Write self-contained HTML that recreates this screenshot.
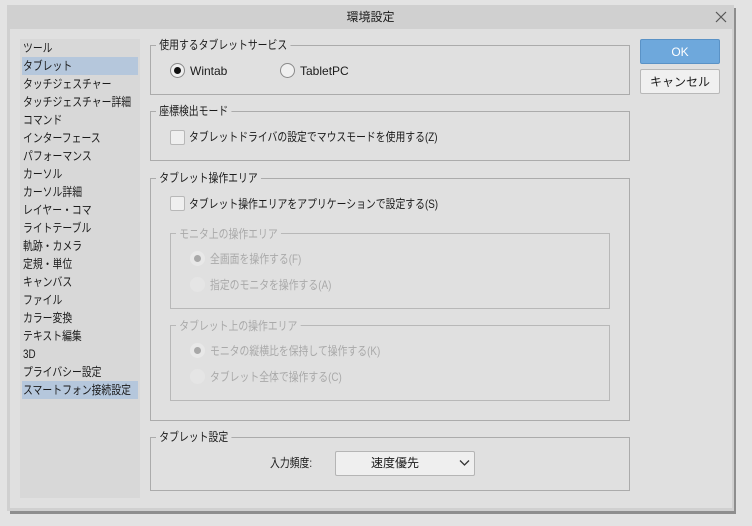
<!DOCTYPE html>
<html><head><meta charset="utf-8"><style>
*{margin:0;padding:0;box-sizing:border-box}
body{width:752px;height:526px;background:#e3e3e3;position:relative;overflow:hidden;font-family:"Liberation Sans","Noto Sans CJK JP",sans-serif;font-size:12px;color:#1a1a1a}
.a{position:absolute}
.t{position:absolute;white-space:nowrap;line-height:14px;transform:scaleX(.82);transform-origin:0 0}
.t.lat,.t.c{transform:none}
.g{position:absolute;border:1px solid #ababab}
.lg{position:absolute;background:#e0e0e0;padding:0 4px;line-height:14px;white-space:nowrap;transform:scaleX(.82);transform-origin:0 0}
.cb{position:absolute;width:15px;height:15px;border:1px solid #b8b8b8;background:#efefef;border-radius:2px}
.rd{position:absolute;width:15px;height:15px;border-radius:50%;border:1px solid #8a8a8a;background:#efefef}
.dis{color:#a9a9a9}
.side div{height:18px;line-height:18px;padding-left:3px;white-space:nowrap}
.side span{display:inline-block;transform:scaleX(.82);transform-origin:0 0}
</style></head><body>
<div class="a" style="left:10px;top:8px;width:726px;height:506px;background:#8e8e8e"></div>
<div class="a" style="left:7px;top:5px;width:727px;height:506px;background:#d0d0d0"></div>
<div class="t c" style="left:0;width:741px;top:10px;text-align:center">環境設定</div>
<svg class="a" style="left:715px;top:11px" width="12" height="12"><path d="M1 1L11 11M11 1L1 11" stroke="#555" stroke-width="1.2"/></svg>
<div class="a" style="left:10px;top:29px;width:722px;height:479px;background:#e0e0e0"></div>
<div class="a side" style="left:20px;top:39px;width:120px;height:459px;background:#d8d8d8">
<div><span>ツール</span></div>
<div style="background:#b5c7dc;margin:0 2px;padding-left:1px"><span>タブレット</span></div>
<div><span>タッチジェスチャー</span></div>
<div><span>タッチジェスチャー詳細</span></div>
<div><span>コマンド</span></div>
<div><span>インターフェース</span></div>
<div><span>パフォーマンス</span></div>
<div><span>カーソル</span></div>
<div><span>カーソル詳細</span></div>
<div><span>レイヤー・コマ</span></div>
<div><span>ライトテーブル</span></div>
<div><span>軌跡・カメラ</span></div>
<div><span>定規・単位</span></div>
<div><span>キャンバス</span></div>
<div><span>ファイル</span></div>
<div><span>カラー変換</span></div>
<div><span>テキスト編集</span></div>
<div><span>3D</span></div>
<div><span>プライバシー設定</span></div>
<div style="background:#b5c7dc;margin:0 2px;padding-left:1px"><span>スマートフォン接続設定</span></div>
</div>
<div class="g" style="left:150px;top:45px;width:480px;height:50px"></div>
<div class="lg" style="left:156px;top:38px">使用するタブレットサービス</div>
<div class="rd" style="left:170px;top:63px"><div class="a" style="left:3px;top:3px;width:7px;height:7px;border-radius:50%;background:#111"></div></div>
<div class="t lat" style="left:190px;top:64px">Wintab</div>
<div class="rd" style="left:280px;top:63px"></div>
<div class="t lat" style="left:300px;top:64px">TabletPC</div>
<div class="g" style="left:150px;top:111px;width:480px;height:50px"></div>
<div class="lg" style="left:156px;top:104px">座標検出モード</div>
<div class="cb" style="left:170px;top:130px"></div>
<div class="t" style="left:189px;top:130px">タブレットドライバの設定でマウスモードを使用する(Z)</div>
<div class="g" style="left:150px;top:178px;width:480px;height:243px"></div>
<div class="lg" style="left:156px;top:171px">タブレット操作エリア</div>
<div class="cb" style="left:170px;top:196px"></div>
<div class="t" style="left:189px;top:197px">タブレット操作エリアをアプリケーションで設定する(S)</div>
<div class="g" style="left:170px;top:233px;width:440px;height:76px;border-color:#b8b8b8"></div>
<div class="lg dis" style="left:176px;top:227px">モニタ上の操作エリア</div>
<div class="a" style="left:190px;top:251px;width:15px;height:15px;border-radius:50%;background:#e8e8e8"><div class="a" style="left:4px;top:4px;width:7px;height:7px;border-radius:50%;background:#a8a8a8"></div></div>
<div class="t dis" style="left:210px;top:252px">全画面を操作する(F)</div>
<div class="a" style="left:190px;top:277px;width:15px;height:15px;border-radius:50%;background:#e5e5e5"></div>
<div class="t dis" style="left:210px;top:278px">指定のモニタを操作する(A)</div>
<div class="g" style="left:170px;top:325px;width:440px;height:76px;border-color:#b8b8b8"></div>
<div class="lg dis" style="left:176px;top:319px">タブレット上の操作エリア</div>
<div class="a" style="left:190px;top:343px;width:15px;height:15px;border-radius:50%;background:#e8e8e8"><div class="a" style="left:4px;top:4px;width:7px;height:7px;border-radius:50%;background:#a8a8a8"></div></div>
<div class="t dis" style="left:210px;top:344px">モニタの縦横比を保持して操作する(K)</div>
<div class="a" style="left:190px;top:369px;width:15px;height:15px;border-radius:50%;background:#e5e5e5"></div>
<div class="t dis" style="left:210px;top:370px">タブレット全体で操作する(C)</div>
<div class="g" style="left:150px;top:437px;width:480px;height:54px"></div>
<div class="lg" style="left:156px;top:430px">タブレット設定</div>
<div class="t" style="left:270px;top:456px">入力頻度:</div>
<div class="a" style="left:335px;top:451px;width:140px;height:25px;border:1px solid #b5b5b5;background:#efefef;border-radius:2px"></div>
<div class="t c" style="left:335px;width:120px;top:456px;text-align:center">速度優先</div>
<svg class="a" style="left:459px;top:459px" width="12" height="8"><path d="M1 1.5 L5.5 6 L10 1.5" fill="none" stroke="#333" stroke-width="1.3"/></svg>
<div class="a" style="left:640px;top:39px;width:80px;height:25px;background:#6ea8dc;border:1px solid #5a92c6;border-radius:2px"></div>
<div class="t lat" style="left:640px;width:80px;top:45px;text-align:center;color:#fff">OK</div>
<div class="a" style="left:640px;top:69px;width:80px;height:25px;background:#f0f0f0;border:1px solid #b8b8b8;border-radius:2px"></div>
<div class="t c" style="left:640px;width:80px;top:75px;text-align:center">キャンセル</div>
</body></html>
